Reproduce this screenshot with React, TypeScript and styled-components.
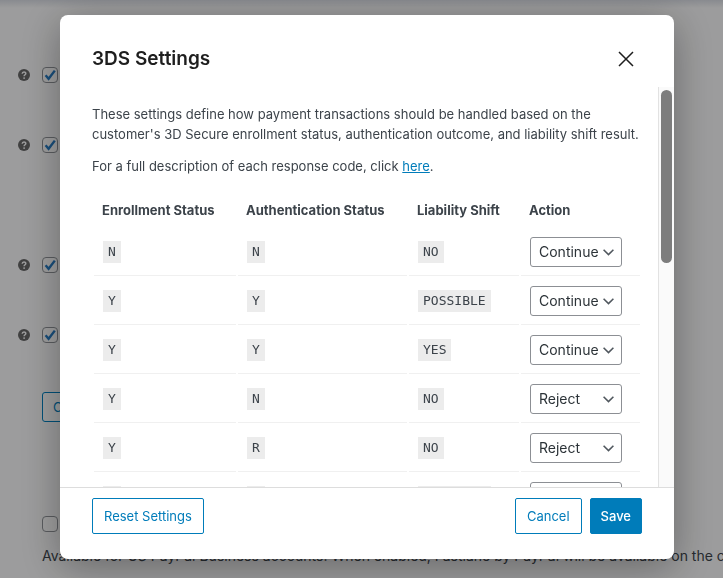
import React from "react";
import styled, { createGlobalStyle, css } from "styled-components";

const GlobalStyle = createGlobalStyle`
  *, *::before, *::after { box-sizing: border-box; }
  html, body { margin: 0; height: 100%; overflow: hidden; }
  body {
    background: #f0f0f1;
    color: #3c434a;
    font: 13px/20px Inter, sans-serif;
  }
  button, select, input { font: inherit; margin: 0; }
`;

const SettingsPage = styled.main`
  height: 100vh;
  overflow: hidden;
  padding: 67px 0 0 18px;
  background: linear-gradient(#d2d5dc, #f0f0f1 8px);
`;

const SettingRow = styled.div<{ $gap: number }>`
  display: flex;
  align-items: center;
  gap: 12px;
  height: 16px;
  margin-bottom: ${(p) => p.$gap}px;
`;

const HelpTip = styled.span`
  display: flex;
  width: 12px;
  height: 12px;
`;

const CheckBox = styled.input`
  appearance: none;
  width: 16px;
  height: 16px;
  border: 1px solid #8c8f94;
  border-radius: 4px;
  background: #f4f4f4;

  &:checked {
    background: #f4f4f4
      url("data:image/svg+xml,%3Csvg xmlns='http://www.w3.org/2000/svg' viewBox='0 0 14 14'%3E%3Cpath d='M2.6 7.2 5.6 10.8 11.8 2.6' fill='none' stroke='%232678bd' stroke-width='2.4'/%3E%3C/svg%3E")
      center / 14px 14px no-repeat;
  }
`;

const outline = css`
  border: 1px solid #007cba;
  background: #fff;
  color: #007cba;
`;

const PageButton = styled.button`
  ${outline}
  display: block;
  height: 30px;
  margin: 0 0 94px 24px;
  padding: 0 10px;
  border-radius: 3px;
  background: #f3f4f4;
`;

const Description = styled.p`
  margin: 0 0 0 24px;
  font-size: 14px;
  white-space: nowrap;
`;

const Overlay = styled.div`
  position: fixed;
  inset: 0;
  display: flex;
  padding: 15px 49px 19px 60px;
  background: rgba(0, 0, 0, 0.35);
`;

const Dialog = styled.section`
  flex: 1;
  min-width: 0;
  display: flex;
  flex-direction: column;
  border-radius: 8px;
  background: #fff;
  box-shadow: 0 8px 40px rgba(0, 0, 0, 0.35);
  overflow: hidden;
`;

const DialogHeader = styled.header`
  display: flex;
  align-items: center;
  justify-content: space-between;
  height: 72px;
  padding: 16px 40px 0 32px;
`;

const Title = styled.h1`
  margin: 0;
  font-size: 19px;
  line-height: 28px;
  font-weight: 600;
  color: #1e1e1e;
`;

const CloseButton = styled.button`
  display: flex;
  padding: 0;
  border: 0;
  background: none;
  color: #1e1e1e;
`;

const Body = styled.div`
  flex: 1;
  min-height: 0;
  display: flex;
`;

const ScrollArea = styled.div`
  flex: 1;
  min-width: 0;
  overflow: hidden;
  padding: 17px 16px 0 32px;
`;

const ScrollTrack = styled.div`
  width: 16px;
  padding: 3px 2px;
  border-left: 1px solid #e2e2e2;
  background: #fafafa;
`;

const ScrollThumb = styled.div`
  width: 11px;
  height: 44%;
  border-radius: 6px;
  background: #7d7d7d;
`;

const Paragraph = styled.p`
  margin: 0 0 12px;
`;

const TextLink = styled.a`
  color: #007cba;
`;

const RulesTable = styled.table`
  width: 100%;
  border-spacing: 2px 0;
  text-align: left;
`;

const HeadCell = styled.th<{ $width?: number }>`
  width: ${(p) => (p.$width ? `${p.$width}px` : "auto")};
  height: 39px;
  padding: 4px 8px 0;
  font-weight: 700;
  white-space: nowrap;
`;

const Cell = styled.td`
  height: 49px;
  padding: 2px 9px 0;
  border-bottom: 1px solid #f0f0f0;
`;

const Code = styled.code`
  display: inline-block;
  height: 22px;
  padding: 0 5px;
  background: #ececec;
  font: 13px/22px "DejaVu Sans Mono", monospace;
`;

const SelectWrap = styled.div`
  display: grid;
  width: 92px;
  align-items: center;

  & > * { grid-area: 1 / 1; }
  & > svg { justify-self: end; margin-right: 8px; pointer-events: none; }
`;

const ActionSelect = styled.select`
  appearance: none;
  width: 100%;
  height: 30px;
  padding: 0 8px;
  border: 1px solid #8c8f94;
  border-radius: 3px;
  background: #fff;
  color: #2c3338;
  font-size: 14px;
`;

const DialogFooter = styled.footer`
  display: flex;
  gap: 8px;
  height: 72px;
  padding: 10px 32px 0;
  border-top: 1px solid #ddd;
`;

const FooterButton = styled.button<{ $primary?: boolean; $push?: boolean }>`
  ${outline}
  height: 36px;
  padding: 0 11px;
  border-radius: 2px;
  ${(p) => p.$push && "margin-right: auto;"}
  ${(p) => p.$primary && "padding: 0 10px; background: #007cba; color: #fff; font-weight: 500;"}
`;

const settings = [
  { label: "First option", gap: 54 },
  { label: "Second option", gap: 104 },
  { label: "Third option", gap: 54 },
  { label: "Fourth option", gap: 49 },
];

const rules = [
  ["N", "N", "NO", "Continue"],
  ["Y", "Y", "POSSIBLE", "Continue"],
  ["Y", "Y", "YES", "Continue"],
  ["Y", "N", "NO", "Reject"],
  ["Y", "R", "NO", "Reject"],
  ["Y", "A", "POSSIBLE", "Continue"],
];

const HelpIcon = () => (
  <svg width="12" height="12" viewBox="0 0 12 12" aria-hidden="true">
    <circle cx="6" cy="6" r="6" fill="#646464" />
    <path d="M4.2 4.7C4.3 2.3 7.8 2.4 7.8 4.5 7.8 5.8 6.1 5.8 6.1 7.3" fill="none" stroke="#f0f0f1" strokeWidth="1.5" />
    <circle cx="6.1" cy="9.1" r="0.9" fill="#f0f0f1" />
  </svg>
);

const Chevron = () => (
  <svg width="11" height="7" viewBox="0 0 11 7" aria-hidden="true">
    <path d="M0.6 0.8 5.5 5.6 10.4 0.8" fill="none" stroke="#50575e" strokeWidth="1.6" />
  </svg>
);

const CloseIcon = () => (
  <svg width="16" height="16" viewBox="0 0 16 16" aria-hidden="true">
    <path d="M1 1 15 15M15 1 1 15" fill="none" stroke="currentColor" strokeWidth="1.5" />
  </svg>
);

export default function App() {
  return (
    <>
      <GlobalStyle />
      <SettingsPage>
        {settings.map((s) => (
          <SettingRow key={s.label} $gap={s.gap}>
            <HelpTip><HelpIcon /></HelpTip>
            <CheckBox type="checkbox" defaultChecked aria-label={s.label} />
          </SettingRow>
        ))}
        <PageButton type="button">Configure</PageButton>
        <SettingRow $gap={14}>
          <HelpTip />
          <CheckBox type="checkbox" aria-label="Fastlane" />
        </SettingRow>
        <Description>
          Available for US PayPal Business accounts. When enabled, Fastlane by PayPal will be available on the checkout
        </Description>
      </SettingsPage>
      <Overlay>
        <Dialog role="dialog" aria-modal="true" aria-labelledby="dialog-title">
          <DialogHeader>
            <Title id="dialog-title">3DS Settings</Title>
            <CloseButton type="button" aria-label="Close"><CloseIcon /></CloseButton>
          </DialogHeader>
          <Body>
            <ScrollArea>
              <Paragraph>
                These settings define how payment transactions should be handled based on the customer's 3D Secure
                enrollment status, authentication outcome, and liability shift result.
              </Paragraph>
              <Paragraph>
                For a full description of each response code, click <TextLink href="#codes">here</TextLink>.
              </Paragraph>
              <RulesTable>
                <thead>
                  <tr>
                    <HeadCell $width={142}>Enrollment Status</HeadCell>
                    <HeadCell $width={169}>Authentication Status</HeadCell>
                    <HeadCell $width={110}>Liability Shift</HeadCell>
                    <HeadCell>Action</HeadCell>
                  </tr>
                </thead>
                <tbody>
                  {rules.map(([enrollment, authentication, liability, action], i) => (
                    <tr key={i}>
                      <Cell><Code>{enrollment}</Code></Cell>
                      <Cell><Code>{authentication}</Code></Cell>
                      <Cell><Code>{liability}</Code></Cell>
                      <Cell>
                        <SelectWrap>
                          <ActionSelect defaultValue={action} aria-label="Action">
                            <option>Continue</option>
                            <option>Reject</option>
                          </ActionSelect>
                          <Chevron />
                        </SelectWrap>
                      </Cell>
                    </tr>
                  ))}
                </tbody>
              </RulesTable>
            </ScrollArea>
            <ScrollTrack><ScrollThumb /></ScrollTrack>
          </Body>
          <DialogFooter>
            <FooterButton type="button" $push>Reset Settings</FooterButton>
            <FooterButton type="button">Cancel</FooterButton>
            <FooterButton type="button" $primary>Save</FooterButton>
          </DialogFooter>
        </Dialog>
      </Overlay>
    </>
  );
}
